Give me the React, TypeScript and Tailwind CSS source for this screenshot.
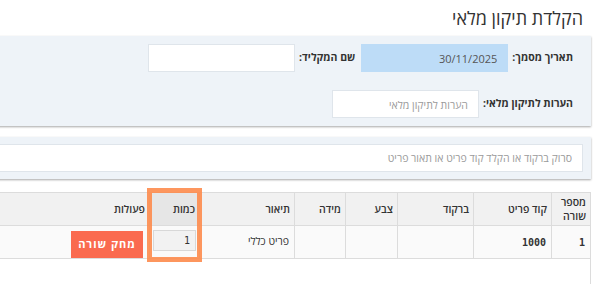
import React from 'react'

const font = { fontFamily: '"Open Sans", "Liberation Sans", Arial, sans-serif' }
const numFont = { fontFamily: '"DejaVu Sans Mono", monospace' }

function Field({ label, value, placeholder, tone }: { label: string; value?: string; placeholder?: string; tone?: 'blue' }) {
  return (
    <div className="flex items-center gap-[4px]">
      <span className="text-[10.5px] font-bold text-[#333] whitespace-nowrap">{label}</span>
      <input
        readOnly
        value={value ?? ''}
        placeholder={placeholder}
        className={`w-[147px] h-[28px] px-[10px] text-[11px] text-[#555] placeholder:text-[#9a9a9a] placeholder:text-[10.5px] border outline-none ${
          tone === 'blue' ? 'bg-[#bddcf7] border-[#bddcf7]' : 'bg-white border-[#dfe5eb]'
        }`}
      />
    </div>
  )
}

export default function App() {
  const head = [
    { t: 'מספר שורה', w: 'w-[39px]' },
    { t: 'קוד פריט', w: 'w-[78px]' },
    { t: 'ברקוד', w: 'w-[76px]' },
    { t: 'צבע', w: 'w-[52px]' },
    { t: 'מידה', w: 'w-[51px]' },
    { t: 'תיאור', w: 'w-[95px]' },
    { t: 'כמות', w: 'w-[50px]' },
    { t: 'פעולות', w: 'w-[250px]' },
  ]

  return (
    <div dir="rtl" className="w-[602px] h-[284px] overflow-hidden bg-white" style={font}>
      <div className="w-[760px] mr-[11px]">
        <h1 className="h-[36px] leading-[36px] pr-[8px] text-[18px] font-normal text-[#333]">הקלדת תיקון מלאי</h1>

        <div className="bg-[#eef3f8] shadow-[0_1px_2px_rgba(0,0,0,0.35)] pr-[18px] pt-[8px] pb-[8px] flex flex-col gap-[18px]">
          <div className="flex items-center gap-[6px]">
            <Field label="תאריך מסמך:" value="30/11/2025" tone="blue" />
            <Field label="שם המקליד:" />
          </div>
          <div className="flex items-center">
            <Field label="הערות לתיקון מלאי:" placeholder="הערות לתיקון מלאי" />
          </div>
        </div>

        <div className="mt-[11px] bg-[#eef3f8] shadow-[0_1px_2px_rgba(0,0,0,0.35)] pr-[8px] py-[7px]">
          <input
            readOnly
            placeholder="סרוק ברקוד או הקלד קוד פריט או תאור פריט"
            className="w-full h-[28px] px-[10px] bg-white border border-[#dfe5eb] text-[10.5px] placeholder:text-[#9a9a9a] outline-none"
          />
        </div>

        <div className="relative mt-[13px]">
          <table className="table-fixed border-collapse w-[691px] text-[10.5px] text-[#333]">
            <thead>
              <tr className="bg-[#f1f1f1] h-[33px]">
                {head.map(h => (
                  <th
                    key={h.t}
                    className={`${h.w} border border-[#dcdcdc] px-[4px] text-right font-semibold leading-[14px] align-middle ${
                      h.t === 'כמות' ? 'bg-[#e6e6e6]' : ''
                    }`}
                  >
                    {h.t === 'מספר שורה' ? (
                      <>
                        מספר
                        <br />
                        שורה
                      </>
                    ) : (
                      h.t
                    )}
                  </th>
                ))}
              </tr>
            </thead>
            <tbody>
              <tr className="bg-[#fafafa] h-[32px]">
                <td className="border border-[#dcdcdc] px-[5px] text-right font-bold text-[10px]" style={numFont}>1</td>
                <td className="border border-[#dcdcdc] px-[5px] text-right font-bold text-[10px]" style={numFont}>1000</td>
                <td className="border border-[#dcdcdc]" />
                <td className="border border-[#dcdcdc]" />
                <td className="border border-[#dcdcdc]" />
                <td className="border border-[#dcdcdc] px-[5px] text-right">פריט כללי</td>
                <td className="border border-[#dcdcdc] pr-[3px] pl-[5px] align-top pt-[4px]">
                  <input
                    readOnly
                    value="1"
                    className="w-[43px] h-[21px] px-[5px] bg-[#f2f2f2] border border-[#d8d8d8] text-right text-[10px] text-[#333] outline-none"
                    style={numFont}
                  />
                </td>
                <td className="border border-[#dcdcdc] pr-[6px] align-top pt-[5px]">
                  <button className="h-[27px] w-[72px] bg-[#fa6a4f] text-white text-[11px] font-bold tracking-[1px]">מחק שורה</button>
                </td>
              </tr>
            </tbody>
          </table>
          <div className="w-[691px] h-[40px] border-r border-[#dcdcdc]" />
          <div className="absolute top-[-4px] right-[389px] w-[55px] h-[74px] border-[5px] border-[#fd8b4d]/90" />
        </div>
      </div>
    </div>
  )
}
